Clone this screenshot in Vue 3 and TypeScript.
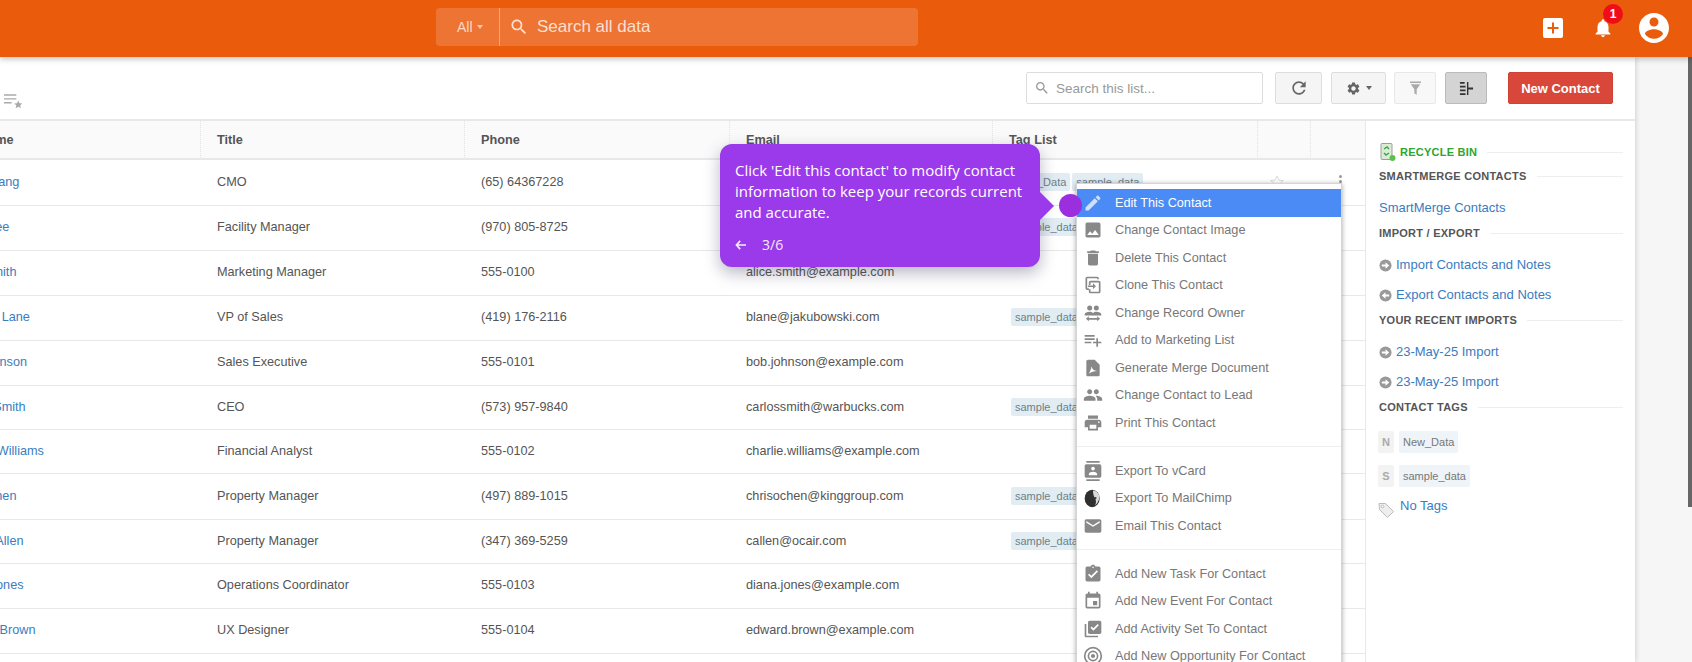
<script setup lang="ts">
interface Contact {
  name: string
  title: string
  phone: string
  email: string
  tags: string[]
  height: number
}

interface MenuItem {
  label: string
  icon: string
}

const contacts: Contact[] = [
  { name: 'Sara Zhang', title: 'CMO', phone: '(65) 64367228', email: 'szhang@example.com', tags: ['New_Data', 'sample_data'], height: 46 },
  { name: 'Maria Lee', title: 'Facility Manager', phone: '(970) 805-8725', email: 'mlee@example.com', tags: ['sample_data'], height: 45 },
  { name: 'Alice Smith', title: 'Marketing Manager', phone: '555-0100', email: 'alice.smith@example.com', tags: [], height: 45 },
  { name: 'Bernard Lane', title: 'VP of Sales', phone: '(419) 176-2116', email: 'blane@jakubowski.com', tags: ['sample_data'], height: 45 },
  { name: 'Bob Johnson', title: 'Sales Executive', phone: '555-0101', email: 'bob.johnson@example.com', tags: [], height: 45 },
  { name: 'Carlos Smith', title: 'CEO', phone: '(573) 957-9840', email: 'carlossmith@warbucks.com', tags: ['sample_data'], height: 44 },
  { name: 'Charlie Williams', title: 'Financial Analyst', phone: '555-0102', email: 'charlie.williams@example.com', tags: [], height: 44 },
  { name: 'Chris Chen', title: 'Property Manager', phone: '(497) 889-1015', email: 'chrisochen@kinggroup.com', tags: ['sample_data'], height: 46 },
  { name: 'Christy Allen', title: 'Property Manager', phone: '(347) 369-5259', email: 'callen@ocair.com', tags: ['sample_data'], height: 44 },
  { name: 'Diana Jones', title: 'Operations Coordinator', phone: '555-0103', email: 'diana.jones@example.com', tags: [], height: 45 },
  { name: 'Edward Brown', title: 'UX Designer', phone: '555-0104', email: 'edward.brown@example.com', tags: [], height: 45 },
]

const columns = ['Full Name', 'Title', 'Phone', 'Email', 'Tag List', '', '']

const menuGroups: MenuItem[][] = [
  [
    { label: 'Edit This Contact', icon: 'M3 17.25V21h3.75L17.81 9.94l-3.75-3.75L3 17.25zM20.71 7.04c.39-.39.39-1.02 0-1.41l-2.34-2.34c-.39-.39-1.02-.39-1.41 0l-1.83 1.83 3.75 3.75 1.83-1.83z' },
    { label: 'Change Contact Image', icon: 'M21 19V5c0-1.1-.9-2-2-2H5c-1.1 0-2 .9-2 2v14c0 1.1.9 2 2 2h14c1.1 0 2-.9 2-2zM8.5 13.5l2.5 3.01L14.5 12l4.5 6H5l3.5-4.5z' },
    { label: 'Delete This Contact', icon: 'M6 19c0 1.1.9 2 2 2h8c1.1 0 2-.9 2-2V7H6v12zM19 4h-3.5l-1-1h-5l-1 1H5v2h14V4z' },
    { label: 'Clone This Contact', icon: 'M5 2h12a2 2 0 0 1 2 2v1h-2V4H5v12h2v2H5a2 2 0 0 1-2-2V4a2 2 0 0 1 2-2zm4 5h10a2 2 0 0 1 2 2v11a2 2 0 0 1-2 2H9a2 2 0 0 1-2-2v-3h2v3h10V9H9v3H7V9a2 2 0 0 1 2-2zm3 3l3.5 3.5L12 17v-2.5H6v-2h6V10z' },
    { label: 'Change Record Owner', icon: 'M8 3a3 3 0 1 1 0 6 3 3 0 0 1 0-6zm8 0a3 3 0 1 1 0 6 3 3 0 0 1 0-6zM8 10.5c2.3 0 3.6.8 4 1.7.4-.9 1.7-1.7 4-1.7 3 0 6 1.2 6 3V15H2v-1.5c0-1.8 3-3 6-3zM7 16v2h10v-2l3.5 3L17 22v-2H7v2l-3.5-3L7 16z' },
    { label: 'Add to Marketing List', icon: 'M14 10H2v2h12v-2zm0-4H2v2h12V6zm4 8v-4h-2v4h-4v2h4v4h2v-4h4v-2h-4zM2 16h8v-2H2v2z' },
    { label: 'Generate Merge Document', icon: 'M14 2H6c-1.1 0-2 .9-2 2v16c0 1.1.9 2 2 2h12c1.1 0 2-.9 2-2V8l-6-6zM7 19c1.5-2.5 2.8-5.5 3.2-9 .4 3 2.6 5.2 6.8 5.6-3.6.2-7 1-10 3.4z' },
    { label: 'Change Contact to Lead', icon: 'M16 11c1.66 0 2.99-1.34 2.99-3S17.66 5 16 5c-1.66 0-3 1.34-3 3s1.34 3 3 3zm-8 0c1.66 0 2.99-1.34 2.99-3S9.66 5 8 5C6.34 5 5 6.34 5 8s1.34 3 3 3zm0 2c-2.33 0-7 1.17-7 3.5V19h14v-2.5c0-2.33-4.67-3.5-7-3.5zm8 0c-.29 0-.62.02-.97.05 1.16.84 1.97 1.97 1.97 3.45V19h6v-2.5c0-2.33-4.67-3.5-7-3.5z' },
    { label: 'Print This Contact', icon: 'M19 8H5c-1.66 0-3 1.34-3 3v6h4v4h12v-4h4v-6c0-1.66-1.34-3-3-3zm-3 11H8v-5h8v5zm3-7c-.55 0-1-.45-1-1s.45-1 1-1 1 .45 1 1-.45 1-1 1zm-1-9H6v4h12V3z' },
  ],
  [
    { label: 'Export To vCard', icon: 'M20 0H4v2h16V0zM4 24h16v-2H4v2zM20 4H4c-1.1 0-2 .9-2 2v12c0 1.1.9 2 2 2h16c1.1 0 2-.9 2-2V6c0-1.1-.9-2-2-2zm-8 2.75c1.24 0 2.25 1.01 2.25 2.25s-1.01 2.25-2.25 2.25S9.75 10.24 9.75 9 10.76 6.75 12 6.75zM17 17H7v-1.5c0-1.67 3.33-2.5 5-2.5s5 .83 5 2.5V17z' },
    { label: 'Export To MailChimp', icon: '' },
    { label: 'Email This Contact', icon: 'M20 4H4c-1.1 0-1.99.9-1.99 2L2 18c0 1.1.9 2 2 2h16c1.1 0 2-.9 2-2V6c0-1.1-.9-2-2-2zm0 4l-8 5-8-5V6l8 5 8-5v2z' },
  ],
  [
    { label: 'Add New Task For Contact', icon: 'M19 3h-4.18C14.4 1.84 13.3 1 12 1c-1.3 0-2.4.84-2.82 2H5c-1.1 0-2 .9-2 2v14c0 1.1.9 2 2 2h14c1.1 0 2-.9 2-2V5c0-1.1-.9-2-2-2zm-7 0c.55 0 1 .45 1 1s-.45 1-1 1-1-.45-1-1 .45-1 1-1zm-2 14l-4-4 1.41-1.41L10 14.17l6.59-6.59L18 9l-8 8z' },
    { label: 'Add New Event For Contact', icon: 'M17 12h-5v5h5v-5zM16 1v2H8V1H6v2H5c-1.11 0-1.99.9-1.99 2L3 19c0 1.1.89 2 2 2h14c1.1 0 2-.9 2-2V5c0-1.1-.9-2-2-2h-1V1h-2zm3 18H5V8h14v11z' },
    { label: 'Add Activity Set To Contact', icon: 'M20 2H8c-1.1 0-2 .9-2 2v12c0 1.1.9 2 2 2h12c1.1 0 2-.9 2-2V4c0-1.1-.9-2-2-2zm-7.53 12L9 10.5l1.4-1.41 2.07 2.08L17.6 6 19 7.41 12.47 14zM4 6H2v14c0 1.1.9 2 2 2h14v-2H4V6z' },
    { label: 'Add New Opportunity For Contact', icon: 'M12 1a11 11 0 1 1 0 22 11 11 0 0 1 0-22zm0 2a9 9 0 1 0 0 18 9 9 0 0 0 0-18zm0 2.5a6.5 6.5 0 1 1 0 13 6.5 6.5 0 0 1 0-13zm0 2a4.5 4.5 0 1 0 0 9 4.5 4.5 0 0 0 0-9zm0 2a2.5 2.5 0 1 1 0 5 2.5 2.5 0 0 1 0-5z' },
  ],
]

const importLinks = [
  { label: 'Import Contacts and Notes', dir: 'right' },
  { label: 'Export Contacts and Notes', dir: 'left' },
]
const recentImports = ['23-May-25 Import', '23-May-25 Import']
const contactTags = ['New_Data', 'sample_data']
</script>

<template>
  <div class="page">
    <header class="topbar">
      <div class="global-search">
        <div class="scope">All <span class="caret"></span></div>
        <div class="global-input">
          <svg class="global-icon" viewBox="0 0 24 24"><path d="M15.5 14h-.79l-.28-.27C15.41 12.59 16 11.11 16 9.5 16 5.91 13.09 3 9.5 3S3 5.91 3 9.5 5.91 16 9.5 16c1.61 0 3.09-.59 4.23-1.57l.27.28v.79l5 4.99L20.49 19l-4.99-5zm-6 0C7.01 14 5 11.99 5 9.5S7.01 5 9.5 5 14 7.01 14 9.5 11.99 14 9.5 14z" /></svg>
          <span>Search all data</span>
        </div>
      </div>
      <div class="top-actions">
        <svg class="add-icon" viewBox="0 0 20 20"><rect width="20" height="20" rx="2" fill="#fff" /><path d="M9 4.500h2V9h4.500v2H11v4.500H9V11H4.500V9H9z" fill="#ea5b0c" /></svg>
        <div class="bell">
          <svg viewBox="0 0 24 24"><path d="M12 22c1.1 0 2-.9 2-2h-4c0 1.1.89 2 2 2zm6-6v-5c0-3.07-1.64-5.64-4.5-6.32V4c0-.83-.67-1.5-1.5-1.5s-1.5.67-1.5 1.5v.68C7.63 5.36 6 7.92 6 11v5l-2 2v1h16v-1l-2-2z" /></svg>
          <span class="badge">1</span>
        </div>
        <svg class="avatar" viewBox="2 2 20 20"><path d="M12 2C6.48 2 2 6.48 2 12s4.48 10 10 10 10-4.48 10-10S17.52 2 12 2zm0 3c1.66 0 3 1.34 3 3s-1.34 3-3 3-3-1.34-3-3 1.34-3 3-3zm0 14.2c-2.5 0-4.71-1.28-6-3.22.03-1.99 4-3.08 6-3.08 1.99 0 5.97 1.09 6 3.08-1.29 1.94-3.5 3.22-6 3.22z" /></svg>
      </div>
    </header>

    <main class="panel">
      <div class="toolbar">
        <svg class="list-star" viewBox="0 0 20 16"><path d="M0 1h13v1.500H0zM0 5h13v1.500H0zM0 9h8v1.500H0z" fill="#aaa" /><path d="M15 7.500l1.300 2.800 3 .3-2.200 2 .6 3-2.700-1.500-2.700 1.500.6-3-2.200-2 3-.3z" fill="#aaa" /></svg>
        <div class="list-search">
          <svg viewBox="0 0 24 24"><path d="M15.5 14h-.79l-.28-.27C15.41 12.59 16 11.11 16 9.5 16 5.91 13.09 3 9.5 3S3 5.91 3 9.5 5.91 16 9.5 16c1.61 0 3.09-.59 4.23-1.57l.27.28v.79l5 4.99L20.49 19l-4.99-5zm-6 0C7.01 14 5 11.99 5 9.5S7.01 5 9.5 5 14 7.01 14 9.5 11.99 14 9.5 14z" /></svg>
          <span>Search this list...</span>
        </div>
        <button class="tool refresh">
          <svg viewBox="0 0 24 24"><path d="M17.65 6.35C16.2 4.9 14.21 4 12 4c-4.42 0-7.99 3.58-7.99 8s3.57 8 7.99 8c3.73 0 6.84-2.55 7.73-6h-2.08c-.82 2.33-3.04 4-5.65 4-3.31 0-6-2.69-6-6s2.69-6 6-6c1.66 0 3.14.69 4.22 1.78L13 11h7V4l-2.35 2.35z" /></svg>
        </button>
        <button class="tool gear">
          <svg viewBox="0 0 24 24"><path d="M19.14 12.94c.04-.3.06-.61.06-.94 0-.32-.02-.64-.07-.94l2.03-1.58c.18-.14.23-.41.12-.61l-1.92-3.32c-.12-.22-.37-.29-.59-.22l-2.39.96c-.5-.38-1.03-.7-1.62-.94l-.36-2.54c-.04-.24-.24-.41-.48-.41h-3.84c-.24 0-.43.17-.47.41l-.36 2.54c-.59.24-1.13.57-1.62.94l-2.39-.96c-.22-.08-.47 0-.59.22L2.74 8.87c-.12.21-.08.47.12.61l2.03 1.58c-.05.3-.09.63-.09.94s.02.64.07.94l-2.03 1.58c-.18.14-.23.41-.12.61l1.92 3.32c.12.22.37.29.59.22l2.39-.96c.5.38 1.03.7 1.62.94l.36 2.54c.05.24.24.41.48.41h3.84c.24 0 .44-.17.47-.41l.36-2.54c.59-.24 1.13-.56 1.62-.94l2.39.96c.22.08.47 0 .59-.22l1.92-3.32c.12-.22.07-.47-.12-.61l-2.01-1.58zM12 15.6c-1.98 0-3.6-1.62-3.6-3.6s1.62-3.6 3.6-3.6 3.6 1.62 3.6 3.6-1.62 3.6-3.6 3.6z" /></svg>
          <span class="caret dark"></span>
        </button>
        <button class="tool filter">
          <svg viewBox="0 0 14 18"><path d="M0 0h14v2H0zM1 3.500h12L8.500 10v7L5.500 15v-5z" /></svg>
        </button>
        <button class="tool split">
          <svg viewBox="0 0 16 16"><path d="M1 1h5v2H1zM1 5h6v2H1zM1 9h6v2H1zM1 13h6v2H1zM8.500 1H10v14H8.500zM10 7h5v2h-5z" /></svg>
        </button>
        <button class="new-contact">New Contact</button>
      </div>

      <div class="content">
        <div class="table-wrap">
          <table class="contacts">
            <colgroup>
              <col class="c-name" />
              <col class="c-title" />
              <col class="c-phone" />
              <col class="c-email" />
              <col class="c-tags" />
              <col class="c-star" />
              <col class="c-more" />
            </colgroup>
            <thead>
              <tr>
                <th v-for="(col, i) in columns" :key="i">{{ col }}</th>
              </tr>
            </thead>
            <tbody>
              <tr v-for="c in contacts" :key="c.email" :style="{ height: c.height + 'px' }">
                <td><a class="link">{{ c.name }}</a></td>
                <td>{{ c.title }}</td>
                <td>{{ c.phone }}</td>
                <td>{{ c.email }}</td>
                <td class="tag-cell">
                  <span v-for="t in c.tags" :key="t" class="chip">{{ t }}</span>
                </td>
                <td class="star-cell">
                  <svg viewBox="0 0 24 24"><path d="M12 3l2.700 6.200 6.800.6-5.100 4.500 1.500 6.600L12 17.400l-5.900 3.500 1.500-6.600-5.100-4.500 6.800-.6z" /></svg>
                </td>
                <td class="more-cell"><span class="kebab"><i></i><i></i><i></i></span></td>
              </tr>
            </tbody>
          </table>
        </div>

        <aside class="sidebar">
          <h4 class="side-head recycle">
            <svg viewBox="0 0 16 18"><rect x="1" y="0.500" width="11" height="16" rx="1" fill="#dcebd8" stroke="#9a9f98" /><path d="M4 6l3-2 2 2M9 10l-3 2-2-2" fill="none" stroke="#3aa53a" stroke-width="1.400" /><circle cx="12.500" cy="15" r="3" fill="#5cc04a" /></svg>
            <span>RECYCLE BIN</span>
          </h4>
          <h4 class="side-head"><span>SMARTMERGE CONTACTS</span></h4>
          <div class="side-list">
            <a class="side-link link">SmartMerge Contacts</a>
          </div>
          <h4 class="side-head"><span>IMPORT / EXPORT</span></h4>
          <div class="side-list">
            <a v-for="l in importLinks" :key="l.label" class="side-link link">
              <svg class="round-arrow" viewBox="0 0 14 14"><circle cx="7" cy="7" r="6.500" fill="#999" /><path :d="l.dir === 'right' ? 'M3 6h4V3.500L11 7l-4 3.500V8H3z' : 'M11 6H7V3.500L3 7l4 3.500V8h4z'" fill="#fff" /></svg>
              {{ l.label }}
            </a>
          </div>
          <h4 class="side-head"><span>YOUR RECENT IMPORTS</span></h4>
          <div class="side-list">
            <a v-for="(r, i) in recentImports" :key="i" class="side-link link">
              <svg class="round-arrow" viewBox="0 0 14 14"><circle cx="7" cy="7" r="6.500" fill="#999" /><path d="M3 6h4V3.500L11 7l-4 3.500V8H3z" fill="#fff" /></svg>
              {{ r }}
            </a>
          </div>
          <h4 class="side-head"><span>CONTACT TAGS</span></h4>
          <div class="tag-list">
            <div v-for="t in contactTags" :key="t" class="tag-row">
              <span class="tag-letter">{{ t[0].toUpperCase() }}</span>
              <span class="tag-name">{{ t }}</span>
            </div>
          </div>
          <div class="no-tags">
            <svg viewBox="0 0 17 17"><path d="M1 1.500h6.500l8 8-6 6-8-8z" fill="#eee" stroke="#bbb" /><circle cx="4.500" cy="4.500" r="1.300" fill="#fff" stroke="#bbb" /></svg>
            <a class="link">No Tags</a>
          </div>
        </aside>
      </div>
    </main>

    <div class="scrollbar"></div>

    <div class="menu">
      <template v-for="(group, g) in menuGroups" :key="g">
        <div v-if="g > 0" class="menu-divider"></div>
        <div
          v-for="item in group"
          :key="item.label"
          class="menu-item"
          :class="{ active: item.label === 'Edit This Contact' }"
        >
          <svg v-if="item.icon" class="menu-icon" viewBox="0 0 24 24"><path :d="item.icon" /></svg>
          <svg v-else class="menu-icon" viewBox="0 0 24 24">
            <ellipse cx="11" cy="12.500" rx="9" ry="10.500" fill="#2f2f2f" />
            <path d="M12 3c4 .5 7 3 7.500 7 .5 3-1 8-5 11 2-4 1-7-.5-9.500C12.500 9 12 6 12 3z" fill="#d8d8d8" />
            <circle cx="15" cy="12" r="1.200" fill="#2f2f2f" />
          </svg>
          <span>{{ item.label }}</span>
        </div>
      </template>
    </div>

    <div class="tour">
      <p>Click 'Edit this contact' to modify contact information to keep your records current and accurate.</p>
      <div class="tour-nav">
        <svg viewBox="0 0 14 12"><path d="M6 1L1.500 6 6 11M1.500 6H13" fill="none" stroke="#fff" stroke-width="2" /></svg>
        <span>3/6</span>
      </div>
    </div>
    <div class="hotspot"></div>
  </div>
</template>

<style scoped>
.page {
  position: relative;
  width: 1692px;
  height: 662px;
  overflow: hidden;
  background: #f6f6f6;
  font-family: "Liberation Sans", Arial, sans-serif;
  font-size: 12.700px;
  color: #555;
}

.topbar {
  position: relative;
  z-index: 2;
  height: 57px;
  background: #ea5b0c;
  display: flex;
  align-items: center;
  box-shadow: 0 2px 6px rgba(0, 0, 0, 0.25);
}

.global-search {
  margin-left: 436px;
  margin-top: -3px;
  width: 482px;
  height: 38px;
  display: flex;
  background: #ee7433;
  border-radius: 4px;
}

.scope {
  width: 64px;
  box-sizing: border-box;
  padding-left: 21px;
  display: flex;
  align-items: center;
  gap: 4px;
  color: rgba(255, 255, 255, 0.72);
  font-size: 14px;
  border-right: 1px solid rgba(255, 255, 255, 0.35);
}

.caret {
  width: 0;
  height: 0;
  border-left: 3.500px solid transparent;
  border-right: 3.500px solid transparent;
  border-top: 4px solid rgba(255, 255, 255, 0.6);
}

.caret.dark {
  border-top-color: #666;
}

.global-input {
  display: flex;
  align-items: center;
  padding-left: 9px;
  gap: 8px;
  color: rgba(255, 255, 255, 0.78);
  font-size: 17px;
}

.global-icon {
  width: 20px;
  height: 20px;
  fill: rgba(255, 255, 255, 0.8);
}

.top-actions {
  margin-left: auto;
  margin-right: 23px;
  margin-top: -2px;
  display: flex;
  align-items: center;
}

.add-icon {
  width: 20px;
  height: 20px;
}

.bell {
  position: relative;
  width: 22px;
  height: 22px;
  margin-left: 29px;
}

.bell svg {
  width: 22px;
  height: 22px;
  fill: #fff;
}

.badge {
  position: absolute;
  top: -13px;
  left: 11px;
  width: 20px;
  height: 20px;
  border-radius: 50%;
  background: #f00d1a;
  color: #fff;
  font-size: 12px;
  font-weight: 700;
  line-height: 20px;
  text-align: center;
}

.avatar {
  width: 30px;
  height: 30px;
  margin-left: 25px;
  fill: #fff;
}

.panel {
  width: 1635px;
  height: 605px;
  background: #fff;
  box-shadow: 0 0 6px rgba(0, 0, 0, 0.2);
  display: flex;
  flex-direction: column;
}

.toolbar {
  height: 63px;
  box-sizing: border-box;
  padding: 15px 22px 0 4px;
  display: flex;
  align-items: flex-start;
}

.list-star {
  width: 19px;
  height: 16px;
  margin-top: 21px;
}

.list-search {
  margin-left: auto;
  width: 237px;
  height: 32px;
  box-sizing: border-box;
  border: 1px solid #ddd;
  border-radius: 2px;
  display: flex;
  align-items: center;
  padding-left: 7px;
  gap: 6px;
  color: #999;
  font-size: 13.500px;
}

.list-search svg {
  width: 16px;
  height: 16px;
  fill: #999;
}

.tool {
  height: 32px;
  padding: 0;
  border: 1px solid #ddd;
  border-radius: 2px;
  background: #f5f5f5;
  display: flex;
  align-items: center;
  justify-content: center;
  gap: 5px;
}

.tool svg {
  fill: #666;
}

.refresh {
  width: 47px;
  margin-left: 12px;
}

.refresh svg {
  width: 20px;
  height: 20px;
}

.gear {
  width: 55px;
  margin-left: 9px;
}

.gear svg {
  width: 15px;
  height: 15px;
}

.filter {
  width: 42px;
  margin-left: 8px;
  background: #f8f8f8;
  border-color: #e8e8e8;
}

.filter svg {
  width: 11px;
  height: 15px;
  fill: #aaa;
}

.split {
  width: 42px;
  margin-left: 9px;
  background: #d4d4d4;
  border-color: #bbb;
}

.split svg {
  width: 15px;
  height: 15px;
  fill: #333;
}

.new-contact {
  width: 105px;
  height: 32px;
  margin-left: 21px;
  padding: 0;
  border: 1px solid #cf4336;
  border-radius: 2px;
  background: #d9473a;
  color: #fff;
  font-family: inherit;
  font-size: 13px;
  font-weight: 700;
}

.content {
  flex: 1;
  display: flex;
  min-height: 0;
  border-top: 2px solid #e8e8e8;
  margin-top: -1px;
}

.table-wrap {
  flex: none;
  width: 1365px;
  overflow: hidden;
}

.contacts {
  width: 1429px;
  margin-left: -64px;
  table-layout: fixed;
  border-collapse: separate;
  border-spacing: 0;
}

.c-name { width: 264px; }
.c-title { width: 264px; }
.c-phone { width: 265px; }
.c-email { width: 263px; }
.c-tags { width: 265px; }
.c-star { width: 53px; }
.c-more { width: 55px; }

th {
  height: 39px;
  box-sizing: border-box;
  padding: 0 16px;
  background: #fafafa;
  border-bottom: 2px solid #e8e8e8;
  border-left: 1px dotted #e2e2e2;
  text-align: left;
  font-weight: 700;
  color: #555;
}

td {
  box-sizing: border-box;
  padding: 0 16px 2px 17px;
  border-bottom: 1px solid #e8e8e8;
  white-space: nowrap;
  overflow: hidden;
}

.link {
  color: #3a7cc0;
}

.chip {
  display: inline-block;
  height: 18px;
  line-height: 18px;
  padding: 0 4px;
  margin-right: 2px;
  border-radius: 2px;
  background: #e1ecf3;
  color: #6f7f88;
  font-size: 11px;
}

.tag-cell {
  padding-left: 19px;
}

.star-cell svg {
  width: 16px;
  height: 16px;
  margin-left: -5px;
  fill: none;
  stroke: #ccc;
  display: block;
}

.more-cell {
  padding: 0 0 2px 29px;
}

.kebab {
  display: flex;
  flex-direction: column;
  gap: 2px;
}

.kebab i {
  width: 3px;
  height: 3px;
  background: #999;
  border-radius: 50%;
}

.sidebar {
  flex: 1;
  box-sizing: border-box;
  padding: 23px 12px 0 13px;
  border-left: 1px solid #e8e8e8;
  font-size: 13px;
}

.side-head {
  margin: 3px 0 0;
  height: 16px;
  display: flex;
  align-items: center;
  font-size: 11px;
  font-weight: 700;
  letter-spacing: 0.250px;
  color: #555;
  white-space: nowrap;
}

.side-head::after {
  content: "";
  flex: 1;
  height: 1px;
  margin-left: 10px;
  background: #eee;
}

.side-head.recycle {
  margin: 0 0 0 1px;
  color: #2ea52e;
}

.recycle svg {
  width: 16px;
  height: 18px;
  margin-right: 4px;
}

.recycle + .side-head {
  margin-top: 8px;
}

.side-list {
  margin-top: 8px;
}

.side-link {
  height: 30px;
  display: flex;
  align-items: center;
  gap: 4px;
}

.round-arrow {
  width: 13px;
  height: 13px;
  flex: none;
  margin-top: 2px;
}

.tag-list {
  margin-top: 16px;
  display: flex;
  flex-direction: column;
  gap: 12px;
}

.tag-row {
  height: 22px;
  display: flex;
  gap: 5px;
}

.tag-letter {
  width: 16px;
  margin-left: -1px;
  background: #f3f3f3;
  color: #aaa;
  font-weight: 700;
  font-size: 11px;
  line-height: 22px;
  text-align: center;
  border-radius: 2px;
}

.tag-name {
  padding: 0 4px;
  background: #eff4f8;
  color: #777;
  font-size: 11px;
  line-height: 22px;
  border-radius: 2px;
}

.no-tags {
  margin-top: 11px;
  display: flex;
  align-items: flex-start;
  gap: 5px;
  height: 18px;
  margin-left: -1px;
}

.no-tags svg {
  width: 17px;
  height: 17px;
  margin-top: 4px;
}

.scrollbar {
  position: absolute;
  top: 57px;
  right: 0;
  width: 4px;
  height: 450px;
  background: #666;
}

.menu {
  position: absolute;
  z-index: 3;
  left: 1076px;
  top: 183px;
  width: 266px;
  height: 500px;
  box-sizing: border-box;
  padding-top: 5px;
  background: #fff;
  border: 1px solid #d4d4d4;
  box-shadow: 0 1px 5px rgba(0, 0, 0, 0.35);
}

.menu-item {
  height: 27.500px;
  display: flex;
  align-items: center;
  color: #777;
}

.menu-item.active {
  background: #4a8bf5;
  color: #fff;
}

.menu-icon {
  width: 20px;
  height: 20px;
  margin-left: 6px;
  margin-right: 12px;
  flex: none;
  fill: #888;
}

.active .menu-icon {
  fill: #cfe0fb;
}

.menu-divider {
  height: 1px;
  margin: 9.800px 0;
  background: #eee;
}

.tour {
  position: absolute;
  z-index: 4;
  left: 720px;
  top: 144px;
  width: 320px;
  height: 123px;
  box-sizing: border-box;
  padding: 16px 10px 0 15px;
  background: #9b3aea;
  border-radius: 12px;
  box-shadow: 0 6px 16px rgba(50, 50, 93, 0.35);
  color: #fff;
  font-family: "Open Sans", sans-serif;
  font-size: 15px;
  line-height: 21px;
}

.tour::after {
  content: "";
  position: absolute;
  left: 100%;
  top: 48px;
  border-left: 14px solid #9b3aea;
  border-top: 14px solid transparent;
  border-bottom: 14px solid transparent;
}

.tour p {
  margin: 0;
}

.tour-nav {
  margin-top: 11px;
  display: flex;
  align-items: center;
  gap: 15px;
  font-size: 14px;
  opacity: 0.9;
}

.tour-nav svg {
  width: 12px;
  height: 10px;
}

.hotspot {
  position: absolute;
  z-index: 5;
  left: 1059px;
  top: 194px;
  width: 23px;
  height: 23px;
  border-radius: 50%;
  background: #9b2fe0;
}
</style>

<style>
html,
body {
  margin: 0;
  overflow: hidden;
}
</style>
